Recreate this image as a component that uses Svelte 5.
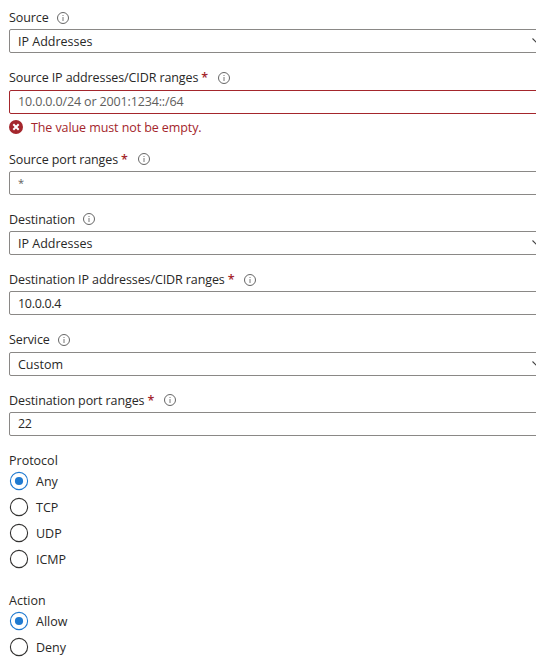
<script>
  const fields = [
    { label: 'Source', value: 'IP Addresses', select: true, low: true, gap: 13 },
    {
      label: 'Source IP addresses/CIDR ranges',
      placeholder: '10.0.0.0/24 or 2001:1234::/64',
      required: true,
      error: 'The value must not be empty.',
      tall: true,
      low: true,
      raised: true,
      gap: 8
    },
    { label: 'Source port ranges', placeholder: '*', required: true, gap: 13 },
    { label: 'Destination', value: 'IP Addresses', select: true, gap: 13 },
    { label: 'Destination IP addresses/CIDR ranges', value: '10.0.0.4', required: true, low: true, gap: 13 },
    { label: 'Service', value: 'Custom', select: true, tall: true, low: true, gap: 13 },
    { label: 'Destination port ranges', value: '22', required: true, raised: true, gap: 17 }
  ];
  const groups = [
    { legend: 'Protocol', options: ['Any', 'TCP', 'UDP', 'ICMP'], selected: 'Any' },
    { legend: 'Action', options: ['Allow', 'Deny'], selected: 'Allow' }
  ];
</script>

<main>
  {#each fields as f}
    <div class="field" style="margin-bottom: {f.gap}px">
      <div class="label" class:tall={f.tall}>
        <span>{f.label}</span>
        {#if f.required}<span class="star">*</span>{/if}
        <svg class="info" class:low={f.low} class:after-star={f.required} width="12" height="12" viewBox="0 0 12 12">
          <circle cx="6" cy="6" r="5.5" fill="none" stroke="#666" stroke-width="1" />
          <path d="M6 5v4" stroke="#777" stroke-width="1" />
          <path d="M6 3v1" stroke="#777" stroke-width="1" />
        </svg>
      </div>
      <div class="box" class:invalid={f.error} class:raised={f.raised}>
        {#if f.value}
          <span class:digits={/^\d/.test(f.value)}>{f.value}</span>
        {:else}
          <span class="placeholder" class:small={f.placeholder === '*'}>{f.placeholder}</span>
        {/if}
        {#if f.select}
          <svg class="chevron" width="12" height="7" viewBox="0 0 12 7">
            <path d="M.5 .5L6 6L11.5 .5" fill="none" stroke="#444" stroke-width="1.1" />
          </svg>
        {/if}
      </div>
      {#if f.error}
        <div class="error">
          <svg width="14" height="14" viewBox="0 0 14 14">
            <circle cx="7" cy="7" r="7" fill="#a4262c" />
            <path d="M4.3 4.3l5.4 5.4M9.7 4.3l-5.4 5.4" stroke="#fff" stroke-width="2" />
          </svg>
          <span>{f.error}</span>
        </div>
      {/if}
    </div>
  {/each}

  {#each groups as g}
    <div class="group">
      <div class="legend">{g.legend}</div>
      {#each g.options as o}
        <div class="option">
          <svg width="20" height="20" viewBox="0 0 20 20">
            <circle cx="10" cy="10" r="8.6" fill="#fff" stroke={o === g.selected ? '#1f7ad1' : '#323130'} stroke-width="1.1" />
            {#if o === g.selected}<circle cx="10" cy="10" r="4.1" fill="#1f7ad1" />{/if}
          </svg>
          <span>{o}</span>
        </div>
      {/each}
    </div>
  {/each}
</main>

<style>
  :global(body) {
    margin: 0;
    background: #fff;
    overflow: hidden;
  }
  main {
    box-sizing: border-box;
    width: 536px;
    height: 662px;
    overflow: hidden;
    padding: 6px 0 0 9px;
    font: 12.5px/18px 'Open Sans', 'Noto Sans', sans-serif;
    color: #292827;
    white-space: nowrap;
  }
  .label {
    display: flex;
    align-items: center;
    box-sizing: border-box;
    height: 23px;
    padding-bottom: 1px;
    letter-spacing: -0.1px;
  }
  .label.tall {
    height: 24px;
    padding-bottom: 2px;
  }
  .label span {
    padding-top: 2px;
  }
  .label .star {
    margin-left: 3px;
    color: #a4262c;
    font-weight: 600;
  }
  .info {
    margin-left: 8px;
    flex: none;
  }
  .info.after-star {
    margin-left: 10px;
  }
  .info.low {
    margin-top: 2px;
  }
  .box {
    display: flex;
    align-items: center;
    justify-content: space-between;
    box-sizing: border-box;
    width: 540px;
    height: 24px;
    padding: 0 5px 0 8px;
    border: 1px solid #8a8886;
    border-radius: 2px;
  }
  .box span {
    padding-top: 2px;
  }
  .box.raised span {
    padding-top: 0;
  }
  .box.invalid {
    border-color: #a4262c;
  }
  .digits {
    letter-spacing: -0.3px;
  }
  .placeholder {
    color: #605e5c;
    letter-spacing: -0.14px;
  }
  .box .small {
    font-size: 11px;
    padding-top: 0;
  }
  .chevron {
    flex: none;
    margin-right: -1px;
  }
  .error {
    display: flex;
    align-items: center;
    gap: 8px;
    height: 26px;
    color: #a4262c;
    letter-spacing: -0.09px;
  }
  .error span {
    padding-top: 2px;
  }
  .group {
    margin-bottom: 21px;
  }
  .legend {
    height: 15px;
    line-height: 15px;
  }
  .option {
    display: flex;
    align-items: center;
    gap: 7px;
    height: 26px;
  }
  .option span {
    padding-top: 2px;
  }
</style>
